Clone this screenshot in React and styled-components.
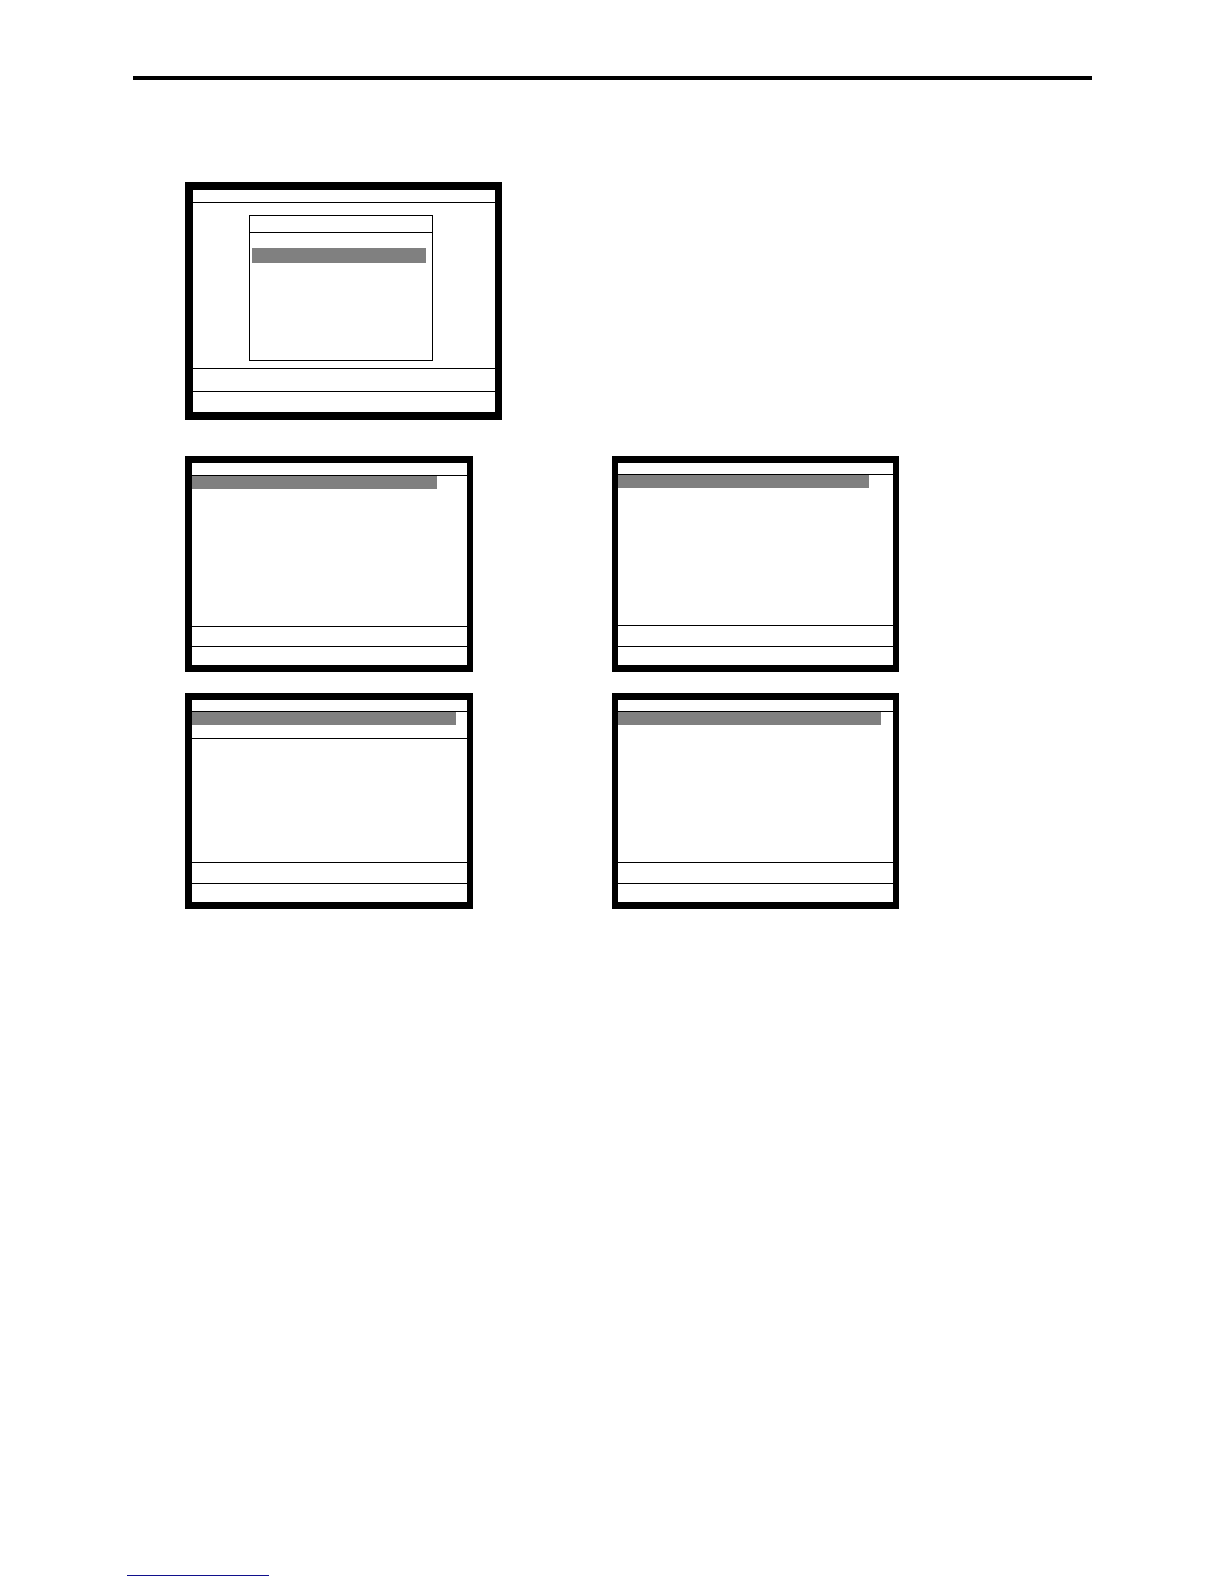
import React from "react";
import styled, { createGlobalStyle } from "styled-components";

const GlobalStyle = createGlobalStyle`
	* {
		box-sizing: border-box;
	}
	body {
		margin: 0;
		background: #ffffff;
	}
`;

const Page = styled.div`
	display: flex;
	flex-direction: column;
	min-height: 100vh;
	padding: 76px 132px 8px 127px;
`;

const HeaderRule = styled.hr`
	align-self: stretch;
	height: 4px;
	margin: 0 0 0 6px;
	border: none;
	background: #000000;
`;

const Screens = styled.main`
	display: flex;
	flex-direction: column;
	align-items: flex-start;
	gap: 36px;
	padding: 102px 0 40px 58px;
`;

const ScreenGrid = styled.div`
	display: grid;
	grid-template-columns: auto auto;
	column-gap: 139px;
	row-gap: 21px;
`;

const Screen = styled.section`
	display: flex;
	flex-direction: column;
	width: ${props => props.$width}px;
	border: solid #000000;
	border-width: ${props => props.$frame};
`;

const TitleBar = styled.header`
	height: ${props => props.$height}px;
	border-bottom: 1px solid #000000;
`;

const Content = styled.div`
	height: ${props => props.$height}px;
`;

const MessageLine = styled.div`
	height: ${props => props.$height}px;
	border-top: 1px solid #000000;
`;

const KeyLine = styled.footer`
	height: ${props => props.$height}px;
	border-top: 1px solid #000000;
`;

const Highlight = styled.div`
	width: ${props => props.$width}px;
	height: ${props => (props.$tall ? 15 : 13)}px;
	background: #808080;
`;

const EntryRow = styled.div`
	height: 14px;
	border-bottom: 1px solid #000000;
`;

const Dialog = styled.div`
	width: 184px;
	height: 146px;
	margin: 0 auto;
	border: 1px solid #000000;
`;

const DialogArea = styled(Content)`
	padding: 12px 6px 0 0;
`;

const DialogTitle = styled.div`
	height: 17px;
	border-bottom: 1px solid #000000;
`;

const DialogList = styled.div`
	padding: 15px 0 0 2px;
`;

const FooterLink = styled.a`
	display: block;
	width: 142px;
	height: 20px;
	margin-top: auto;
	border-bottom: 1px solid #10108c;
`;

const MenuScreen = () => {
	return (
		<Screen $width={317} $frame='8px 7px 8px 8px'>
			<TitleBar $height={13} />
			<DialogArea $height={165}>
				<Dialog>
					<DialogTitle />
					<DialogList>
						<Highlight $width={174} $tall />
					</DialogList>
				</Dialog>
			</DialogArea>
			<MessageLine $height={23} />
			<KeyLine $height={21} />
		</Screen>
	);
};

const ListScreen = ({ width, frame, title = 12, message = 21, bar, entry }) => {
	return (
		<Screen $width={width} $frame={frame}>
			<TitleBar $height={title} />
			<Content $height={150}>
				<Highlight $width={bar} />
				{entry && <EntryRow />}
			</Content>
			<MessageLine $height={message} />
			<KeyLine $height={19} />
		</Screen>
	);
};

const leftFrame = { width: 288, frame: "7px 6px 7px 7px" };
const rightFrame = { width: 287, frame: "7px 6px 7px 6px" };

const App = () => {
	return (
		<>
			<GlobalStyle />
			<Page>
				<HeaderRule />
				<Screens>
					<MenuScreen />
					<ScreenGrid>
						<ListScreen {...leftFrame} title={13} message={20} bar={245} />
						<ListScreen {...rightFrame} bar={251} />
						<ListScreen {...leftFrame} bar={264} entry />
						<ListScreen {...rightFrame} bar={263} />
					</ScreenGrid>
				</Screens>
				<FooterLink href='#top' aria-label='Back to top' />
			</Page>
		</>
	);
};

export default App;
